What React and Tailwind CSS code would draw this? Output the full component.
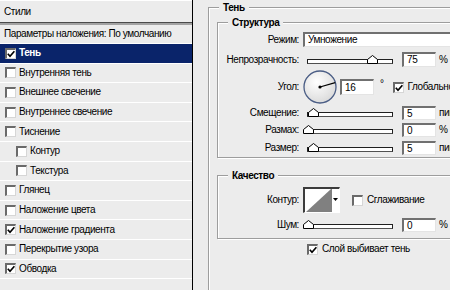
const layers = [
  { label: 'Тень', checked: true, active: true },
  { label: 'Внутренняя тень' },
  { label: 'Внешнее свечение' },
  { label: 'Внутреннее свечение' },
  { label: 'Тиснение' },
  { label: 'Контур', sub: true },
  { label: 'Текстура', sub: true },
  { label: 'Глянец' },
  { label: 'Наложение цвета' },
  { label: 'Наложение градиента', checked: true },
  { label: 'Перекрытие узора' },
  { label: 'Обводка', checked: true },
];

function Check({ checked }) {
  return (
    <span className="flex h-[11px] w-[11px] flex-none items-center justify-center border-t-2 border-l-2 border-r border-b border-t-[#6a6a6a] border-l-[#6a6a6a] border-r-[#d6d6d6] border-b-[#d6d6d6] bg-white">
      {checked && (
        <svg width="8" height="8" viewBox="0 0 8 8">
          <path d="M0.8 3.8 L3 6.2 L7.4 1.2" stroke="#000" strokeWidth="1.7" fill="none" />
        </svg>
      )}
    </span>
  );
}

function Field({ value, h = 'h-[15px]' }) {
  return (
    <div className={`flex ${h} w-[34px] flex-none items-center border-t-2 border-l-2 border-r border-b border-t-[#707070] border-l-[#707070] border-r-[#e4e4e4] border-b-[#e4e4e4] bg-white pl-[3px]`}>
      {value}
    </div>
  );
}

function Slider({ at }) {
  return (
    <div className="relative h-[14px] w-[90px] flex-none pl-[4px] pt-[6px]">
      <div className="h-[5px] border border-[#202020] border-b-[#505050] bg-white" />
      <svg
        className="absolute top-[2px]"
        style={{ left: at }}
        width="11"
        height="9"
        viewBox="0 0 11 9"
      >
        <polygon points="0.5,8.5 0.5,4.5 5.5,0.5 10.5,4.5 10.5,8.5" fill="#fff" stroke="#000" />
      </svg>
    </div>
  );
}

function Label({ children }) {
  return <span className="mr-[4px] w-[81px] flex-none text-right">{children}</span>;
}

function Group({ title, className = '', children }) {
  return (
    <div className={`relative border border-[#9d9d9d] shadow-[inset_1px_1px_0_#fff,1px_1px_0_#fff] ${className}`}>
      <span className="absolute -top-[7px] left-[10px] bg-[#ececec] px-[4px] font-bold leading-[13px]">
        {title}
      </span>
      {children}
    </div>
  );
}

function SliderRow({ label, at, value, unit, h = 'h-[14px]' }) {
  return (
    <div className={`flex ${h} items-center`}>
      <Label>{label}</Label>
      <Slider at={at} />
      <div className="ml-[9px]">
        <Field value={value} h={h} />
      </div>
      <span className="ml-[3px]">{unit}</span>
    </div>
  );
}

export default function App() {
  return (
    <div className="flex h-[290px] w-[450px] overflow-hidden whitespace-nowrap bg-[#ececec] text-[10px] leading-none tracking-[-0.4px] text-black font-['Liberation_Sans',Arial,sans-serif]">
      <aside className="w-[193px] flex-none border-r border-black">
        <div className="flex h-[22px] items-center border-t border-white pl-[4px]">Стили</div>
        <div className="h-px bg-[#4a4a4a]" />
        <div className="h-[2px] bg-[#a3a3a3]" />
        <div className="flex h-[19px] items-center border-b border-white pl-[4px]">
          Параметры наложения: По умолчанию
        </div>
        {layers.map(({ label, checked, active, sub }) => (
          <div
            key={label}
            className={`flex h-[19.6px] items-center gap-[3px] border-b border-white ${sub ? 'pl-[16px]' : 'pl-[5px]'} ${active ? 'bg-[#0a246a] font-bold text-white' : ''}`}
          >
            <Check checked={checked} />
            <span>{label}</span>
          </div>
        ))}
        <div className="h-[19.6px] border-b border-white" />
      </aside>

      <main className="min-w-0 flex-1 pl-[15px]">
        <Group title="Тень" className="mt-[7px] h-[300px] w-[270px] pl-[8px]">
          <Group title="Структура" className="mt-[14px] w-[260px] pb-[2px]">
            <div className="mt-[9px] flex h-[15px] items-center">
              <Label>Режим:</Label>
              <div className="flex h-[15px] w-[160px] items-center border-t-2 border-l-2 border-r border-b border-t-[#707070] border-l-[#707070] border-r-[#e4e4e4] border-b-[#e4e4e4] bg-white pl-[3px]">
                Умножение
              </div>
            </div>
            <div className="mt-[5px]">
              <SliderRow label="Непрозрачность:" at={64} value="75" unit="%" h="h-[15px]" />
            </div>
            <div className="mt-[3px] flex h-[34px] items-center">
              <Label>Угол:</Label>
              <svg width="34" height="34" viewBox="0 0 34 34" className="flex-none">
                <defs>
                  <radialGradient id="dial" cx="40%" cy="35%" r="70%">
                    <stop offset="0" stopColor="#ffffff" />
                    <stop offset="1" stopColor="#d9d9d9" />
                  </radialGradient>
                </defs>
                <circle cx="17" cy="17" r="16" fill="url(#dial)" stroke="#4a5d85" strokeWidth="1.3" />
                <line x1="17" y1="17" x2="32.2" y2="12.6" stroke="#000" strokeWidth="1.2" />
                <circle cx="17" cy="17" r="1.6" fill="#000" />
              </svg>
              <div className="ml-[3px]">
                <Field value="16" h="h-[16px]" />
              </div>
              <span className="ml-[6px] -mt-[6px]">°</span>
              <span className="ml-[9px]">
                <Check checked />
              </span>
              <span className="ml-[4px]">Глобальное освещение</span>
            </div>
            <div className="mt-[2px]">
              <SliderRow label="Смещение:" at={5} value="5" unit="пикс." />
            </div>
            <div className="mt-[3px]">
              <SliderRow label="Размах:" at={0} value="0" unit="%" />
            </div>
            <div className="mt-[4px]">
              <SliderRow label="Размер:" at={5} value="5" unit="пикс." />
            </div>
          </Group>

          <Group title="Качество" className="mt-[17px] w-[260px] pb-[6px]">
            <div className="mt-[11px] flex h-[26px] items-center">
              <Label>Контур:</Label>
              <div className="flex h-[26px] w-[37px] flex-none border-t-2 border-l-2 border-r border-b border-t-[#3c3c3c] border-l-[#3c3c3c] border-r-[#ffffff] border-b-[#ffffff] bg-white">
                <svg width="26" height="23" viewBox="0 0 26 23" className="flex-none">
                  <polygon points="1,23 26,0 26,23" fill="#808080" />
                </svg>
                <div className="flex w-[8px] flex-none justify-center border-l border-[#808080] pt-[9px]">
                  <svg width="5" height="3" viewBox="0 0 5 3">
                    <polygon points="0,0 5,0 2.5,3" fill="#000" />
                  </svg>
                </div>
              </div>
              <span className="ml-[12px]">
                <Check />
              </span>
              <span className="ml-[4px]">Сглаживание</span>
            </div>
            <div className="mt-[5px]">
              <SliderRow label="Шум:" at={0} value="0" unit="%" />
            </div>
          </Group>

          <div className="mt-[4px] flex h-[12px] items-center pl-[90px]">
            <Check checked />
            <span className="ml-[4px]">Слой выбивает тень</span>
          </div>
        </Group>
      </main>
    </div>
  );
}
